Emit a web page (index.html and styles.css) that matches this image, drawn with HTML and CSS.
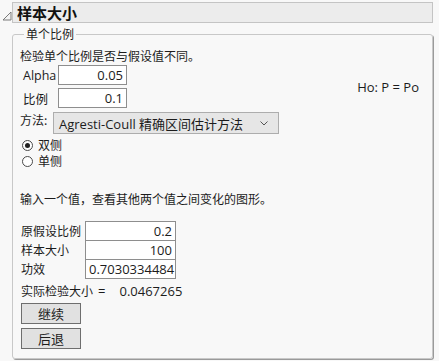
FILE: index.html
```html
<!DOCTYPE html>
<html lang="zh">
<head>
  <meta charset="UTF-8" />
  <title>样本大小</title>
  <link rel="stylesheet" href="styles.css">
</head>
<body>
  <div class="header">
    <svg class="toggle" width="10" height="10" viewBox="0 0 10 10"><path d="M1 9 L9 1 L9 9 Z" fill="#f4f4f4" stroke="#7a7a7a" stroke-width="1"/></svg>
    <div class="title-bar">样本大小</div>
  </div>

  <fieldset class="group">
    <legend>单个比例</legend>
    <div class="intro">检验单个比例是否与假设值不同。</div>

    <div class="top">
      <div class="params">
        <div class="param-row">
          <span class="param-label">Alpha</span>
          <div class="num-box">0.05</div>
        </div>
        <div class="param-row">
          <span class="param-label">比例</span>
          <div class="num-box">0.1</div>
        </div>
      </div>
      <div class="hypo">Ho: P = Po</div>
    </div>

    <div class="method-row">
      <span class="method-label">方法:</span>
      <div class="select">
        <span>Agresti-Coull 精确区间估计方法</span>
        <svg class="chev" width="8" height="5" viewBox="0 0 8 5"><path d="M0.5 0.5 L4 4 L7.5 0.5" fill="none" stroke="#555" stroke-width="1"/></svg>
      </div>
    </div>

    <div class="radios">
      <div class="radio-row"><span class="radio checked"></span>双侧</div>
      <div class="radio-row"><span class="radio"></span>单侧</div>
    </div>

    <div class="hint">输入一个值，查看其他两个值之间变化的图形。</div>

    <div class="calc">
      <span class="calc-label">原假设比例</span><div class="num-box wide">0.2</div>
      <span class="calc-label">样本大小</span><div class="num-box wide">100</div>
      <span class="calc-label">功效</span><div class="num-box wide">0.7030334484</div>
    </div>

    <div class="actual">实际检验大小<span class="eq">=</span><span class="actual-val">0.0467265</span></div>

    <div class="buttons">
      <button class="btn">继续</button>
      <button class="btn">后退</button>
    </div>
  </fieldset>
</body>
</html>
```

FILE: styles.css
```css
body {
  margin: 0;
  padding: 2px;
  background-color: #f8f8f8;
  color: #1c1c1c;
  font-family: "Open Sans", "Noto Sans CJK SC", sans-serif;
  font-size: 12px;
  width: 435px;
  box-sizing: border-box;
}

.header {
  display: flex;
  align-items: center;
  height: 21px;
}

.toggle {
  margin-top: 6px;
  flex-shrink: 0;
}

.title-bar {
  flex: 1;
  height: 19px;
  padding-left: 4px;
  background-color: #ececec;
  border: 1px solid #c4c4c4;
  font-family: "Noto Sans CJK SC", sans-serif;
  font-weight: bold;
  font-size: 15px;
  line-height: 19px;
  color: #111;
}

.group {
  margin: 3px 0 0 10px;
  padding: 0 0 6px 7px;
  height: 333px;
  box-sizing: border-box;
  border: 1px solid #c8c8c8;
  border-radius: 3px;
  box-shadow: 1px 1px 0 #9a9a9a;
}

.group legend {
  padding: 0 2px;
  margin-left: 4px;
  font-family: "Noto Sans CJK SC", sans-serif;
  font-size: 12px;
  line-height: 16px;
}

.intro {
  margin-top: 6px;
  line-height: 16px;
  font-family: "Noto Sans CJK SC", sans-serif;
}

.top {
  display: flex;
  justify-content: space-between;
  align-items: center;
  margin-top: 1px;
}

.params {
  display: flex;
  flex-direction: column;
  gap: 3px;
}

.param-row {
  display: flex;
  align-items: center;
}

.param-label {
  width: 35px;
  padding-left: 3px;
  font-size: 12.5px;
}

.num-box {
  width: 61px;
  height: 18px;
  box-sizing: content-box;
  padding: 0 3px;
  border: 1px solid #8e8e8e;
  background: #fff;
  text-align: right;
  line-height: 18px;
  font-size: 13px;
}

.hypo {
  margin-right: 13px;
  font-size: 13px;
}

.method-row {
  display: flex;
  align-items: center;
  margin-top: 4px;
}

.method-label {
  width: 33px;
  font-family: "Noto Sans CJK SC", sans-serif;
  align-self: flex-start;
  margin-top: -1px;
}

.select {
  display: flex;
  align-items: center;
  justify-content: space-between;
  width: 226px;
  height: 22px;
  padding: 0 10px 0 5px;
  box-sizing: border-box;
  border: 1px solid #adadad;
  background: #e6e6e6;
  font-size: 13px;
}

.radios {
  margin-top: 3px;
  padding-left: 2px;
}

.radio-row {
  display: flex;
  align-items: center;
  height: 16px;
  line-height: 16px;
  font-size: 12px;
  font-family: "Noto Sans CJK SC", sans-serif;
}

.radio {
  position: relative;
  width: 11px;
  height: 11px;
  margin-right: 5px;
  box-sizing: border-box;
  border: 1px solid #4a4a4a;
  border-radius: 50%;
  background: #fff;
}

.radio.checked::after {
  content: "";
  position: absolute;
  left: 2px;
  top: 2px;
  width: 5px;
  height: 5px;
  border-radius: 50%;
  background: #222;
}

.hint {
  margin-top: 22px;
  font-family: "Noto Sans CJK SC", sans-serif;
  line-height: 16px;
}

.calc {
  display: grid;
  grid-template-columns: 64px auto;
  justify-content: start;
  align-items: center;
  margin-top: 14px;
  padding-left: 1px;
}

.calc-label {
  font-family: "Noto Sans CJK SC", sans-serif;
  font-size: 12px;
}

.num-box.wide {
  width: 83px;
  margin-bottom: -1px;
}

.actual {
  margin-top: 4px;
  padding-left: 1px;
  font-family: "Noto Sans CJK SC", sans-serif;
}

.eq {
  margin-left: 5px;
  font-family: "Open Sans", sans-serif;
  font-size: 13px;
}

.actual-val {
  margin-left: 14px;
  font-family: "Open Sans", sans-serif;
  font-size: 13px;
}

.buttons {
  display: flex;
  flex-direction: column;
  gap: 4px;
  margin-top: 3px;
  padding-left: 1px;
}

.btn {
  width: 60px;
  height: 21px;
  padding: 0;
  border: 1px solid #6e6e6e;
  background: #e1e1e1;
  font-family: "Noto Sans CJK SC", sans-serif;
  font-size: 13px;
  color: #1c1c1c;
}
```
